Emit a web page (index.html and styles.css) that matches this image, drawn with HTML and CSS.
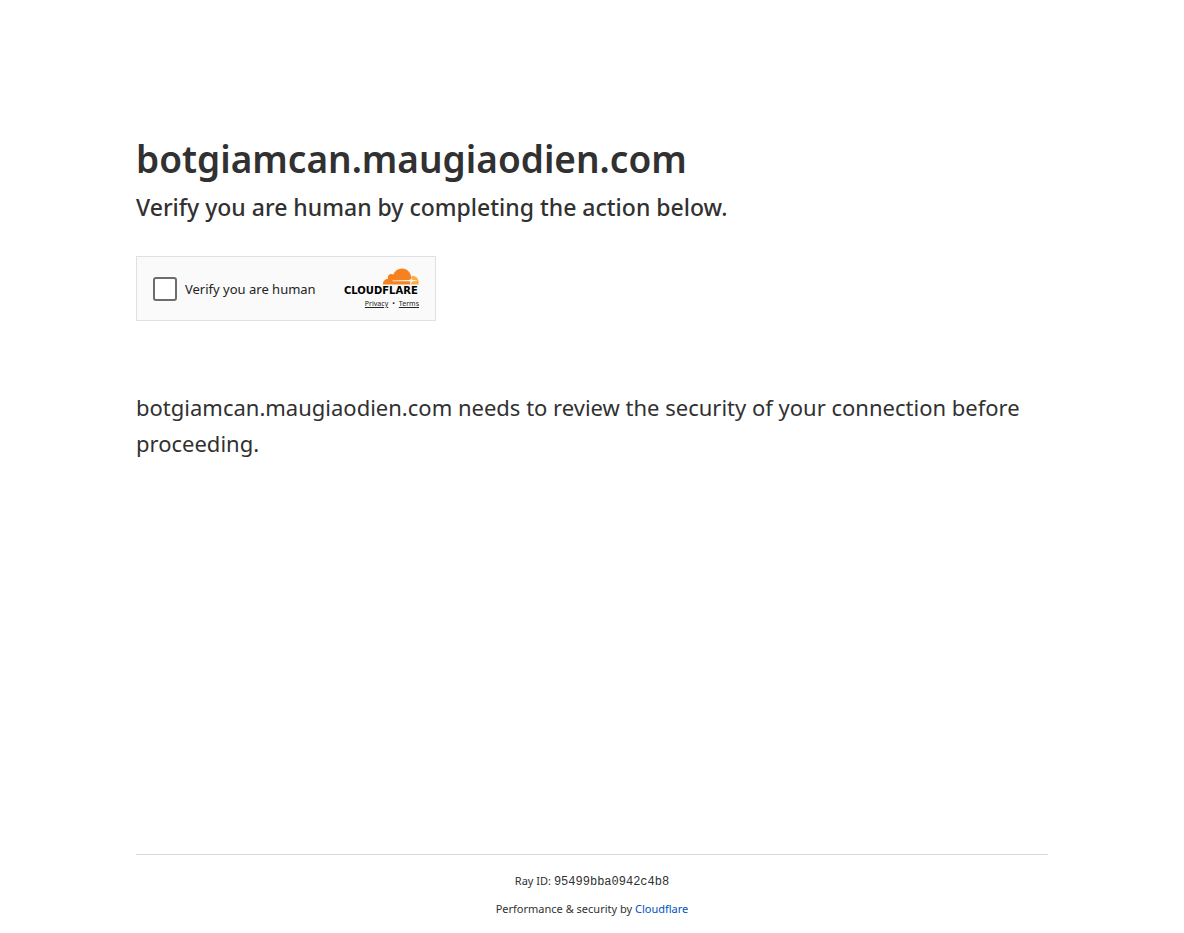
FILE: index.html
```html
<!DOCTYPE html>
<html lang="en">
<head>
<meta charset="utf-8">
<meta name="viewport" content="width=device-width, initial-scale=1">
<title>Just a moment...</title>
<link rel="stylesheet" href="styles.css">
</head>
<body>
<main class="main">
  <h1 class="host">botgiamcan.maugiaodien.com</h1>
  <p class="lead">Verify you are human by completing the action below.</p>
  <div class="widget">
    <label class="check"><input class="box" type="checkbox"><span>Verify you are human</span></label>
    <div class="brand">
      <svg class="logo" viewBox="0 0 75 28" role="img" aria-label="Cloudflare">
        <path fill="#f6821f" d="M39 16.6C38.8 13 41 10.8 44 10.7C43 7.500 46 4.800 49.200 6.500C51 2.500 54 .5 58 .5C62.500 .5 66 3.500 67 8C68 10 67 11.500 65 12L48.500 12.600L48.500 13.200L65.500 13.300C67 13.500 66.300 15.500 65.800 16.600Z"/>
        <path fill="#fbad41" d="M68 7.700C72.300 7.400 75.500 11.500 74.600 16.600H66.700C67.500 14.500 67.500 13.800 69 13.300L73 12.900V12.500L69.300 12.100C67 11.900 67.300 9.500 68 7.700Z"/>
        <text class="wordmark" x="0" y="26">CLOUDFLARE</text>
      </svg>
      <div class="links"><a href="#privacy">Privacy</a><span>•</span><a href="#terms">Terms</a></div>
    </div>
  </div>
  <p class="reason">botgiamcan.maugiaodien.com needs to review the security of your connection before proceeding.</p>
</main>
<footer class="footer">
  <div class="footer-inner">
    <div>Ray ID: <code class="ray">95499bba0942c4b8</code></div>
    <div>Performance &amp; security by <a class="cf" href="#cloudflare">Cloudflare</a></div>
  </div>
</footer>
</body>
</html>
```
FILE: styles.css
```css
* { box-sizing: border-box; margin: 0; padding: 0; }
body { display: flex; flex-direction: column; min-height: 100vh; background: #fff; color: #313131; font-family: "Segoe UI", "Noto Sans", "Open Sans", sans-serif; }
.main { flex: 1; width: 100%; max-width: 960px; margin: 0 auto; padding: 129px 24px 0; }
.host { font-size: 37px; line-height: 60px; font-weight: 600; }
.lead { font-size: 23px; line-height: 36px; font-weight: 500; }
.widget { display: flex; align-items: center; justify-content: space-between; width: 300px; max-width: 100%; height: 65px; margin-top: 31px; padding: 0 16px; border: 1px solid #e0e0e0; background: #fafafa; }
.check { display: flex; align-items: center; gap: 8px; font-size: 13px; color: #232323; }
.box { appearance: none; width: 24px; height: 24px; border: 2px solid #6d6d6d; border-radius: 3px; background: #fff; }
.brand { display: flex; flex-direction: column; align-items: flex-end; }
.logo { display: block; width: 75px; height: 28px; overflow: visible; }
.wordmark { font: 700 10px "DejaVu Sans", sans-serif; fill: #000; }
.links { display: flex; gap: 4px; margin-top: 3px; font-size: 7px; line-height: 10px; color: #232323; }
.links a { color: inherit; }
.reason { margin-top: 68px; font-size: 22px; line-height: 36px; }
.footer { width: 100%; max-width: 960px; margin: 0 auto; padding: 0 24px; }
.footer-inner { display: flex; flex-direction: column; gap: 10px; padding: 17px 0 15px; border-top: 1px solid #d9d9d9; text-align: center; font-size: 11px; line-height: 18px; }
.ray { font-family: "Liberation Mono", monospace; font-size: 12px; line-height: 16px; }
.cf { color: #0051c3; text-decoration: none; }
```
